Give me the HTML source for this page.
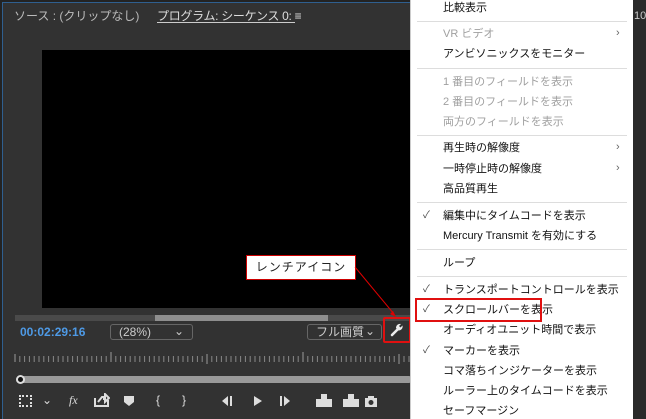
<!DOCTYPE html><html><head><meta charset="utf-8"><style>
*{margin:0;padding:0;box-sizing:border-box}
body{width:646px;height:419px;overflow:hidden;background:#232323;font-family:"Liberation Sans","Noto Sans CJK JP",sans-serif;position:relative}
.a{position:absolute}
.panel{left:2px;top:2px;width:410px;height:417px;background:#323232;border:1px solid #2f5f8f;border-bottom:none}
.tt{font-size:12px;color:#bbb;top:7px;white-space:nowrap}
.menu{left:410px;top:0;width:223px;height:419px;background:#fff;border-left:1px solid #ccc}
.it{position:absolute;left:32px;font-size:11px;color:#111;white-space:nowrap;line-height:14px}
.g{color:#a0a0a0}
.sep{position:absolute;left:6px;width:210px;height:1px;background:#ddd}
.ck{position:absolute;left:12px;font-size:10px;color:#444;line-height:14px}
.ar{position:absolute;left:205px;font-size:11px;color:#666}
.ic{color:#ddd;font-size:12px;top:393px}
</style></head><body>
<div class="a panel"></div>
<div class="a tt" style="left:14px">ソース : (クリップなし)</div>
<div class="a tt" style="left:157px;color:#ddd;letter-spacing:-0.3px">プログラム: シーケンス 0: ≡</div>
<div class="a" style="left:157px;top:22px;width:138px;height:1px;background:#ccc"></div>
<div class="a" style="left:42px;top:50px;width:370px;height:258px;background:#000"></div>
<div class="a" style="left:15px;top:315px;width:397px;height:6px;background:#4a4a4a"></div>
<div class="a" style="left:155px;top:315px;width:173px;height:6px;background:#8e8e8e"></div>
<div class="a" style="left:20px;top:325px;font-size:12px;color:#4e9ae6;font-weight:bold">00:02:29:16</div>
<div class="a" style="left:110px;top:324px;width:83px;height:16px;border:1px solid #666;border-radius:3px;color:#ccc;font-size:12px;padding-left:8px;line-height:14px">(28%)<span style="position:absolute;right:8px;top:-1px">⌄</span></div>
<div class="a" style="left:307px;top:324px;width:75px;height:16px;border:1px solid #666;border-radius:3px;color:#ccc;font-size:12px;padding-left:8px;line-height:14px">フル画質<span style="position:absolute;right:6px;top:-1px">⌄</span></div>
<svg class="a" style="left:389px;top:322px" width="16" height="16" viewBox="0 0 16 16"><path d="M3 13 L9 7" stroke="#eee" stroke-width="2.6" stroke-linecap="round"/><path d="M7 6 a4 4 0 0 1 5-4 l-2 2 l1.5 1.5 l2-2 a4 4 0 0 1-4 5z" fill="#eee"/></svg>
<div class="a" style="left:383px;top:317px;width:28px;height:26px;border:2px solid #e01010;border-radius:2px"></div>
<svg class="a" style="left:14px;top:350px" width="398" height="14">
<path d="M1 4v8M97 2v10M193 4v10M289 2v10M385 4v10" stroke="#999"/>
<path d="M5.8 6v6M10.6 6v6M15.4 6v6M20.2 6v6M25 6v6M29.8 6v6M34.6 6v6M39.4 6v6M44.2 6v6M49 6v6M53.8 6v6M58.6 6v6M63.4 6v6M68.2 6v6M73 6v6M77.8 6v6M82.6 6v6M87.4 6v6M92.2 6v6M101.8 6v6M106.6 6v6M111.4 6v6M116.2 6v6M121 6v6M125.8 6v6M130.6 6v6M135.4 6v6M140.2 6v6M145 6v6M149.8 6v6M154.6 6v6M159.4 6v6M164.2 6v6M169 6v6M173.8 6v6M178.6 6v6M183.4 6v6M188.2 6v6M197.8 6v6M202.6 6v6M207.4 6v6M212.2 6v6M217 6v6M221.8 6v6M226.6 6v6M231.4 6v6M236.2 6v6M241 6v6M245.8 6v6M250.6 6v6M255.4 6v6M260.2 6v6M265 6v6M269.8 6v6M274.6 6v6M279.4 6v6M284.2 6v6M293.8 6v6M298.6 6v6M303.4 6v6M308.2 6v6M313 6v6M317.8 6v6M322.6 6v6M327.4 6v6M332.2 6v6M337 6v6M341.8 6v6M346.6 6v6M351.4 6v6M356.2 6v6M361 6v6M365.8 6v6M370.6 6v6M375.4 6v6M380.2 6v6M390 6v6M395 6v6" stroke="#888"/>
</svg>
<div class="a" style="left:18px;top:376px;width:394px;height:7px;background:#999;border-radius:3px"></div>
<div class="a" style="left:16px;top:375px;width:9px;height:9px;border-radius:50%;background:#111;border:2px solid #ddd"></div>
<div class="a" style="left:19px;top:395px;width:13px;height:12px;border:2px dotted #ddd"></div>
<div class="a ic" style="left:42px">⌄</div>
<div class="a ic" style="left:69px;font-style:italic;font-family:'Liberation Serif',serif">fx</div>
<svg class="a" style="left:94px;top:393px" width="16" height="14"><path d="M1 5v8h13v-6M4 9l4-5h3V1l4 4-4 4V6H9" stroke="#ddd" stroke-width="2" fill="none"/></svg>
<svg class="a" style="left:124px;top:396px" width="10" height="10"><path d="M0 0h10v6l-5 4-5-4z" fill="#ddd"/></svg>
<div class="a ic" style="left:156px">{</div>
<div class="a ic" style="left:182px">}</div>
<svg class="a" style="left:222px;top:396px" width="90" height="10"><path d="M0 5l6-5v10zM8 0h2v10H8z M32 0l8 5-8 5z M58 0h2v10h-2zM62 0l6 5-6 5z" fill="#ddd"/></svg>
<svg class="a" style="left:316px;top:394px" width="65" height="14"><g fill="#ddd"><rect x="0" y="5" width="16" height="8"/><rect x="5" y="0" width="6" height="6"/><rect x="27" y="5" width="16" height="8"/><rect x="32" y="0" width="6" height="6"/><rect x="49" y="4" width="12" height="9"/><rect x="52" y="2" width="6" height="3"/></g><circle cx="55" cy="8.5" r="2.5" fill="#323232"/></svg>
<div class="a" style="left:246px;top:255px;width:110px;height:25px;background:#fff;border:1px solid #c00;font-size:12px;color:#222;text-align:center;line-height:23px;letter-spacing:1px">レンチアイコン</div>
<svg class="a" style="left:350px;top:262px" width="60" height="60"><path d="M5 5 L44 52" stroke="#d00" stroke-width="1"/><path d="M46 55l-6-3 3-3z" fill="#d00"/></svg>
<div class="a" style="left:633px;top:0;width:13px;height:419px;background:#2a2a2a"></div>
<div class="a" style="left:634px;top:10px;font-size:11px;color:#ccc">10</div>
<div class="a menu">
<div class="it" style="top:1px">比較表示</div>
<div class="sep" style="top:21px"></div>
<div class="it g" style="top:27px">VR ビデオ</div><div class="ar g" style="top:27px">›</div>
<div class="it" style="top:47px">アンビソニックスをモニター</div>
<div class="sep" style="top:68px"></div>
<div class="it g" style="top:75px">1 番目のフィールドを表示</div>
<div class="it g" style="top:95px">2 番目のフィールドを表示</div>
<div class="it g" style="top:115px">両方のフィールドを表示</div>
<div class="sep" style="top:135px"></div>
<div class="it" style="top:141px">再生時の解像度</div><div class="ar" style="top:141px">›</div>
<div class="it" style="top:162px">一時停止時の解像度</div><div class="ar" style="top:162px">›</div>
<div class="it" style="top:182px">高品質再生</div>
<div class="sep" style="top:202px"></div>
<div class="ck" style="top:209px">✓</div><div class="it" style="top:209px">編集中にタイムコードを表示</div>
<div class="it" style="top:229px">Mercury Transmit を有効にする</div>
<div class="sep" style="top:249px"></div>
<div class="it" style="top:256px">ループ</div>
<div class="sep" style="top:276px"></div>
<div class="ck" style="top:283px">✓</div><div class="it" style="top:283px">トランスポートコントロールを表示</div>
<div class="ck" style="top:303px">✓</div><div class="it" style="top:303px">スクロールバーを表示</div>
<div class="it" style="top:323px">オーディオユニット時間で表示</div>
<div class="ck" style="top:344px">✓</div><div class="it" style="top:344px">マーカーを表示</div>
<div class="it" style="top:364px">コマ落ちインジケーターを表示</div>
<div class="it" style="top:384px">ルーラー上のタイムコードを表示</div>
<div class="it" style="top:404px">セーフマージン</div>
<div style="position:absolute;left:4px;top:298px;width:127px;height:24px;border:2px solid #e01010"></div>
</div>
</body></html>
